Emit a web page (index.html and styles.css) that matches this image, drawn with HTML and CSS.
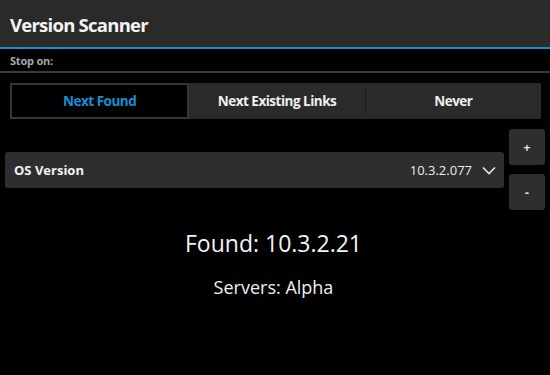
FILE: index.html
```html
<!DOCTYPE html>
<html>
<head>
<meta charset="utf-8">
<link rel="stylesheet" href="styles.css">
</head>
<body>
<div class="app">
  <header class="titlebar"><h1 class="title">Version Scanner</h1></header>
  <div class="stopbar">Stop on:</div>
  <div class="segmented">
    <div class="seg seg-active">Next Found</div>
    <div class="seg">Next Existing Links</div>
    <div class="seg seg-divided">Never</div>
  </div>
  <div class="picker-row">
    <div class="dropdown">
      <span class="dd-label">OS Version</span>
      <span class="dd-value">10.3.2.077
        <svg class="chev" width="14" height="9" viewBox="0 0 14 9"><path d="M1 1.5 L7 7.5 L13 1.5" fill="none" stroke="#e8e8e8" stroke-width="1.6"/></svg>
      </span>
    </div>
    <div class="stepper">
      <div class="step-btn">+</div>
      <div class="step-btn">-</div>
    </div>
  </div>
  <div class="result">
    <div class="found">Found: 10.3.2.21</div>
    <div class="servers">Servers: Alpha</div>
  </div>
</div>
</body>
</html>
```
FILE: styles.css
```css
html, body {
  margin: 0;
  padding: 0;
  background: #000;
}
body {
  width: 550px;
  height: 375px;
  overflow: hidden;
  font-family: "Open Sans", "Noto Sans", sans-serif;
  color: #f2f2f2;
}
.titlebar {
  height: 47px;
  background: #2a2a2a;
  border-bottom: 2px solid #1a8ecb;
  display: flex;
  align-items: center;
  padding-left: 10px;
}
.title {
  margin: 0;
  padding-top: 2px;
  font-size: 18.5px;
  font-weight: 700;
  color: #f4f4f4;
  letter-spacing: -0.75px;
}
.stopbar {
  height: 22px;
  border-bottom: 2px solid #3a3a3a;
  display: flex;
  align-items: center;
  padding-left: 10px;
  font-size: 11px;
  font-weight: 700;
  color: #a8a8a8;
  letter-spacing: -0.2px;
}
.segmented {
  margin: 10px 9px 0 10px;
  height: 36px;
  display: flex;
  background: #2a2a2a;
}
.seg {
  flex: 1;
  display: flex;
  align-items: center;
  justify-content: center;
  font-size: 13.5px;
  font-weight: 700;
  color: #f0f0f0;
  letter-spacing: -0.5px;
  box-sizing: border-box;
}
.seg-active {
  background: #000;
  border: 2px solid #363636;
  color: #1391d2;
}
.seg-divided {
  border-left: 1px solid #1c1c1c;
  margin: 4px 0;
}
.picker-row {
  display: flex;
  margin: 10px 5px 0 5px;
  gap: 5px;
  align-items: flex-start;
}
.dropdown {
  flex: 1;
  margin-top: 23px;
  height: 36px;
  background: #2e2e2e;
  border-radius: 3px;
  display: flex;
  align-items: center;
  justify-content: space-between;
  padding: 0 8px 0 9px;
}
.dd-label {
  font-size: 13px;
  font-weight: 700;
  color: #f2f2f2;
}
.dd-value {
  font-size: 13px;
  color: #ececec;
  display: flex;
  align-items: center;
  gap: 10px;
}
.chev {
  display: block;
}
.stepper {
  display: flex;
  flex-direction: column;
  gap: 9px;
}
.step-btn {
  width: 36px;
  height: 36px;
  background: #2e2e2e;
  border-radius: 3px;
  display: flex;
  align-items: center;
  justify-content: center;
  font-size: 12px;
  font-weight: 700;
  color: #e8e8e8;
}
.result {
  display: flex;
  flex-direction: column;
  align-items: center;
  padding-top: 18px;
  padding-right: 3px;
}
.found {
  font-size: 23px;
  color: #f4f4f4;
  line-height: 30px;
}
.servers {
  font-size: 18px;
  color: #f0f0f0;
  margin-top: 17px;
  line-height: 24px;
}
```
